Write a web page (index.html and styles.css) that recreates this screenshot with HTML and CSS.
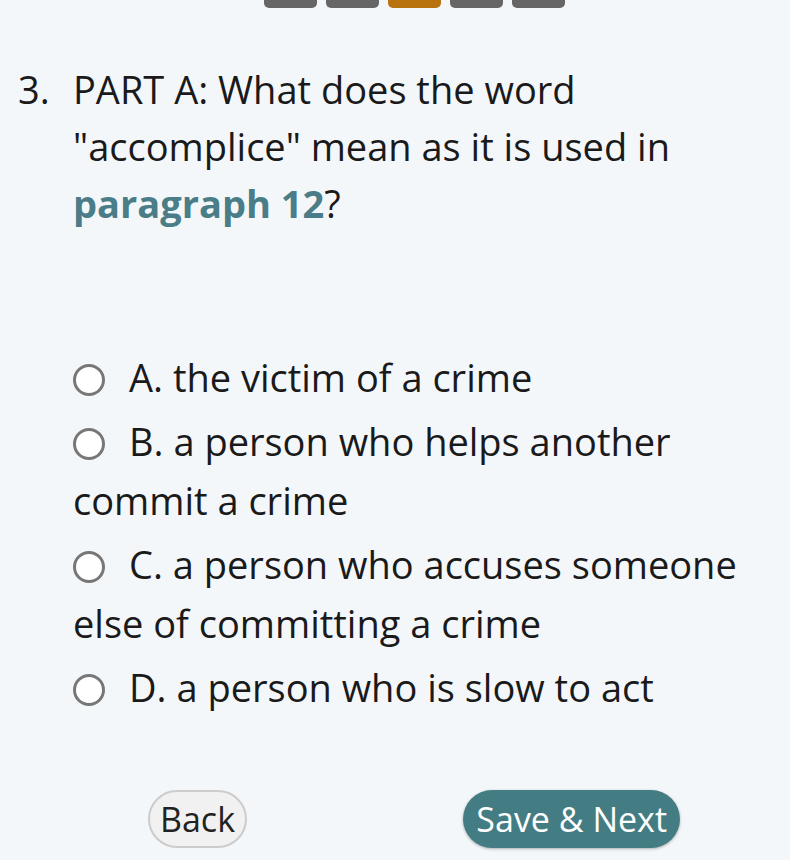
FILE: index.html
```html
<!DOCTYPE html>
<html lang="en">
<head>
  <meta charset="UTF-8" />
  <meta name="viewport" content="width=device-width, initial-scale=1.0" />
  <title>Question 3</title>
  <link rel="stylesheet" href="styles.css">
</head>
<body>
  <div class="progress">
    <span class="step"></span>
    <span class="step"></span>
    <span class="step current"></span>
    <span class="step"></span>
    <span class="step"></span>
  </div>

  <div class="question">
    <span class="num">3.</span>
    <p class="prompt">PART A: What does the word "accomplice" mean as it is used in <strong class="ref">paragraph 12</strong>?</p>
  </div>

  <ul class="choices">
    <li><span class="radio"></span>A. the victim of a crime</li>
    <li><span class="radio"></span>B. a person who helps another commit a crime</li>
    <li><span class="radio"></span>C. a person who accuses someone else of committing a crime</li>
    <li><span class="radio"></span>D. a person who is slow to act</li>
  </ul>

  <div class="nav">
    <button class="back">Back</button>
    <button class="next">Save &amp; Next</button>
  </div>
</body>
</html>
```

FILE: styles.css
```css
body {
  font-family: 'Open Sans', sans-serif;
  background-color: #f4f7fa;
  color: #1a1a1a;
  margin: 0;
  padding: 0;
  width: 790px;
  height: 860px;
  overflow: hidden;
}
.progress {
  display: flex;
  justify-content: center;
  gap: 9px;
  padding-left: 39px;
  height: 8px;
}
.step {
  width: 53px;
  height: 8px;
  background: #666;
  border-radius: 0 0 5px 5px;
}
.step.current {
  background: #b8720e;
}
.question {
  display: flex;
  margin-top: 53px;
  padding-left: 18px;
  font-size: 38px;
  line-height: 57px;
}
.num {
  width: 55px;
  flex-shrink: 0;
}
.prompt {
  margin: 0;
  width: 610px;
}
.ref {
  color: #4a7d87;
  font-weight: 700;
}
.choices {
  list-style: none;
  margin: 116px 0 0;
  padding: 0 30px 0 73px;
  font-size: 38px;
  line-height: 59px;
}
.choices li {
  margin-bottom: 5px;
}
.radio {
  display: inline-block;
  width: 26px;
  height: 26px;
  border: 3px solid #777;
  border-radius: 50%;
  background: #fff;
  vertical-align: -4px;
  margin-right: 24px;
}
.nav {
  display: flex;
  justify-content: space-between;
  margin-top: 73px;
  padding: 0 110px 0 148px;
}
button {
  font-family: 'Open Sans', sans-serif;
  font-size: 34px;
  height: 58px;
  border-radius: 29px;
  cursor: pointer;
  padding: 0 10px;
}
.back {
  background: #f1f1f1;
  color: #222;
  border: 2px solid #ccc;
}
.next {
  background: #437d83;
  color: #fff;
  border: none;
  padding: 0 13px;
  box-shadow: 0 1px 3px rgba(0, 0, 0, 0.3);
}
```
